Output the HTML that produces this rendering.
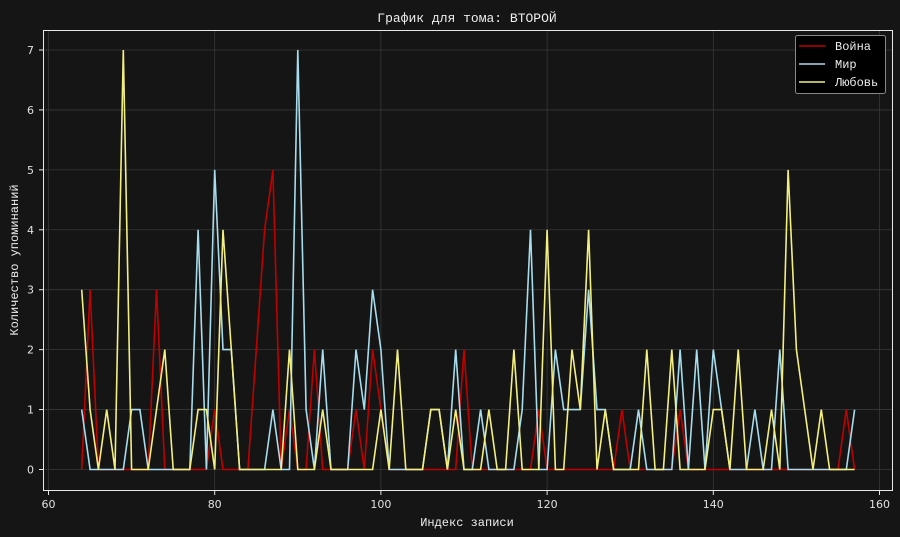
<!DOCTYPE html>
<html><head><meta charset="utf-8"><style>
html,body{margin:0;padding:0;background:#151515;}
svg{display:block}
</style></head><body>
<svg id="s" width="900" height="537" viewBox="0 0 900 537" xmlns="http://www.w3.org/2000/svg">
<rect width="900" height="537" fill="#151515"/>
<g id="grid" stroke="#383838" stroke-width="0.8"></g>
<g id="lines" fill="none" stroke-width="1.6" stroke-linejoin="miter"></g>
<rect x="43.5" y="30.5" width="849" height="460" fill="none" stroke="#e8e8e8" stroke-width="1"/>
<g id="ticks" stroke="#e8e8e8" stroke-width="1"></g>
<g id="tl" fill="#e0e0e0" font-family="DejaVu Sans, sans-serif" font-size="11"></g>
<text x="467" y="22" text-anchor="middle" fill="#eeeeee" font-family="Liberation Mono, DejaVu Sans Mono, monospace" font-size="13">График для тома: ВТОРОЙ</text>
<text x="467" y="526" text-anchor="middle" fill="#eeeeee" font-family="Liberation Mono, DejaVu Sans Mono, monospace" font-size="12">Индекс записи</text>
<text transform="translate(18,260) rotate(-90)" text-anchor="middle" fill="#eeeeee" font-family="Liberation Mono, DejaVu Sans Mono, monospace" font-size="12">Количество упоминаний</text>
<rect x="795.5" y="35.5" width="90" height="58" rx="2" fill="#000" stroke="#888" stroke-width="1"/>
<line x1="799" y1="46" x2="825" y2="46" stroke="#c00000" stroke-width="1.6"/>
<line x1="799" y1="64" x2="825" y2="64" stroke="#a6dcec" stroke-width="1.6"/>
<line x1="799" y1="82" x2="825" y2="82" stroke="#f3ef7e" stroke-width="1.6"/>
<g fill="#eeeeee" font-family="Liberation Mono, DejaVu Sans Mono, monospace" font-size="12">
<text x="835" y="50">Война</text><text x="835" y="68">Мир</text><text x="835" y="86">Любовь</text>
</g>
</svg>
<script>
var X=function(i){return 48.5+(i-60)*8.31;},Y=function(v){return 469.5-v*59.93;};
var ns="http://www.w3.org/2000/svg";
function el(p,t,a,txt){var e=document.createElementNS(ns,t);for(var k in a)e.setAttribute(k,a[k]);if(txt!==undefined)e.textContent=txt;document.getElementById(p).appendChild(e);}
for(var v=0;v<=7;v++){el("grid","line",{x1:44,x2:892,y1:Y(v),y2:Y(v)});el("ticks","line",{x1:39,x2:43,y1:Y(v),y2:Y(v)});el("tl","text",{x:34,y:Y(v)+4,"text-anchor":"end"},v);}
for(var x=60;x<=160;x+=20){el("grid","line",{x1:X(x),x2:X(x),y1:31,y2:490});el("ticks","line",{x1:X(x),x2:X(x),y1:491,y2:495});el("tl","text",{x:X(x),y:508,"text-anchor":"middle"},x);}
function arr(o){var a=[];for(var i=64;i<=157;i++)a.push(o[i]||0);return a;}
var red=arr({65:3,73:3,80:1,85:2,86:4,87:5,89:1,92:2,97:1,99:2,100:1,110:2,119:1,129:1,136:1,156:1});
var blue=arr({64:1,70:1,71:1,78:4,80:5,81:2,82:2,87:1,90:7,91:1,93:2,97:2,98:1,99:3,100:2,106:1,107:1,109:2,112:1,117:1,118:4,121:2,122:1,123:1,124:1,125:3,126:1,127:1,131:1,136:2,138:2,140:2,141:1,145:1,148:2,157:1});
var yel=arr({64:3,65:1,67:1,69:7,73:1,74:2,78:1,79:1,81:4,82:2,89:2,93:1,100:1,102:2,106:1,107:1,109:1,113:1,116:2,120:4,123:2,124:1,125:4,127:1,132:2,135:2,140:1,141:1,143:2,147:1,149:5,150:2,151:1,153:1});
function pl(a,c){var p=a.map(function(v,k){return X(64+k).toFixed(1)+","+Y(v).toFixed(1);}).join(" ");el("lines","polyline",{points:p,stroke:c});}
pl(red,"#c00000");pl(blue,"#a6dcec");pl(yel,"#f3ef7e");
</script>
</body></html>
